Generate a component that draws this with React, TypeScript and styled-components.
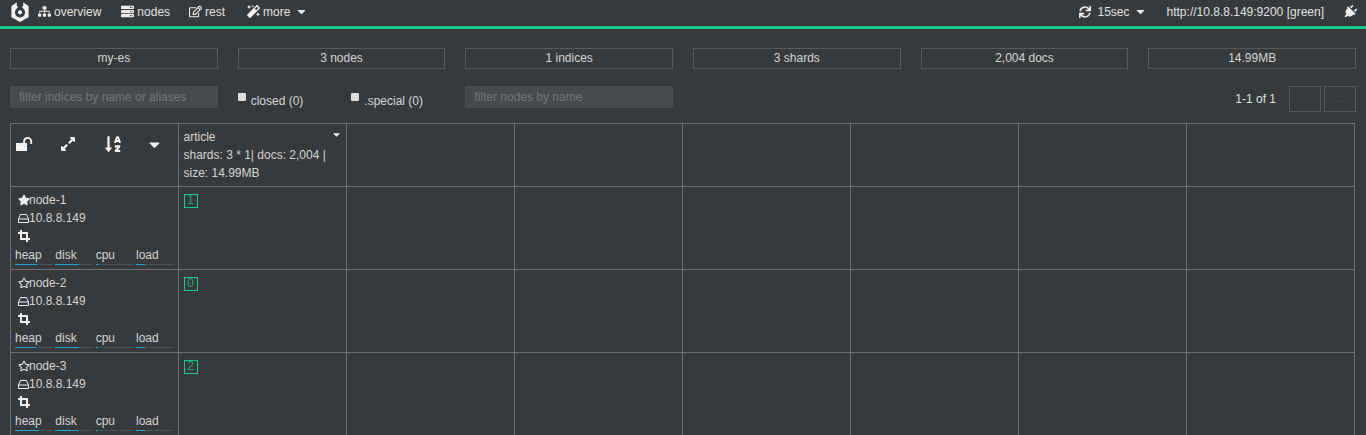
import React from "react";
import styled, { createGlobalStyle } from "styled-components";
import {
  FaSitemap, FaServer, FaRegEdit, FaMagic, FaSync, FaPlug, FaStar, FaRegStar,
  FaExpandAlt, FaSortAlphaDown, FaCaretDown,
} from "react-icons/fa";

const Global = createGlobalStyle`
  html, body { margin: 0; padding: 0; background: #373a3c; height: 100%; overflow: hidden; }
  body { font-family: "Liberation Sans", Arial, sans-serif; font-size: 12px; color: #d3d5d6; line-height: 18px; }
  * { box-sizing: border-box; }
`;

const Nav = styled.nav`
  height: 29px;
  border-bottom: 3px solid #17c98d;
  display: flex;
  align-items: center;
  justify-content: space-between;
  padding: 0 9px 3px 10px;
  color: #e0e2e3;
`;
const NavGroup = styled.div`
  display: flex;
  align-items: center;
`;
const Logo = styled.svg`
  width: 20px;
  height: 20px;
  margin-right: 8px;
  display: block;
`;
const NavItem = styled.span<{ $gap?: number }>`
  display: inline-flex;
  align-items: center;
  gap: 3px;
  margin-right: ${(p) => p.$gap ?? 19}px;
  white-space: nowrap;
  svg { color: #eeeeee; flex-shrink: 0; }
`;
const NavCaret = styled(FaCaretDown)<{ $left: number }>`
  margin-left: ${(p) => p.$left}px;
`;
const Plug = styled(FaPlug)`
  transform: rotate(45deg);
`;
const Stats = styled.div`
  display: grid;
  grid-template-columns: repeat(6, 1fr);
  gap: 20px;
  padding: 19px 10px 0;
`;
const Stat = styled.div`
  height: 21px;
  border: 1px solid #55595c;
  text-align: center;
  line-height: 19px;
`;
const Filters = styled.div`
  display: grid;
  grid-template-columns: repeat(6, 1fr);
  gap: 20px;
  padding: 17px 10px 0;
  height: 54px;
`;
const FilterInput = styled.input<{ $column?: number }>`
  width: 100%;
  height: 22px;
  background: #464a4d;
  border: 1px solid #4c5053;
  border-radius: 2px;
  padding: 0 8px;
  font: 12px "Liberation Sans", Arial, sans-serif;
  color: #d3d5d6;
  grid-column: ${(p) => p.$column ?? "auto"};
  &::placeholder { color: #737779; opacity: 1; }
`;
const CheckLabel = styled.label<{ $left?: number }>`
  display: flex;
  align-items: center;
  height: 22px;
  margin-top: -8px;
  margin-left: ${(p) => p.$left ?? 0}px;
  white-space: nowrap;
`;
const CheckBox = styled.span`
  width: 8px;
  height: 8px;
  background: #dedede;
  border-radius: 1px;
  margin-right: 5px;
  margin-top: -8px;
`;
const Pager = styled.div`
  display: flex;
  align-items: center;
  justify-content: flex-end;
  height: 26px;
  grid-column: 6;
`;
const PagerText = styled.span`
  margin-right: 10px;
  color: #dfe1e2;
`;
const PagerBtn = styled.button`
  width: 32px;
  height: 26px;
  margin-left: 3px;
  background: transparent;
  border: 1px solid #55595c;
  color: #44484b;
  font: 12px "Liberation Sans", Arial, sans-serif;
  padding: 0;
`;
const Table = styled.table`
  border-collapse: collapse;
  table-layout: fixed;
  width: 1345px;
  margin-left: 10px;
`;
const Cell = styled.td`
  border: 1px solid #6f7274;
  width: 168px;
  padding: 4px 4px 0 4.5px;
  vertical-align: top;
`;
const HeadCell = styled(Cell)`
  height: 63px;
  position: relative;
`;
const NodeCell = styled(Cell)`
  height: 83px;
`;
const HeadTools = styled.div`
  display: flex;
  align-items: center;
  height: 32px;
  padding-left: 0.5px;
  color: #f4f4f4;
`;
const Tool = styled.span<{ $width: number }>`
  width: ${(p) => p.$width}px;
  display: flex;
  align-items: center;
  svg { display: block; }
`;
const IndexCaret = styled(FaCaretDown)`
  position: absolute;
  top: 5px;
  right: 4px;
  color: #eeeeee;
`;
const NodeLine = styled.div`
  display: flex;
  align-items: center;
  height: 18px;
  padding-left: 2.5px;
  svg { color: #eeeeee; flex-shrink: 0; }
`;
const IconSlot = styled.span`
  width: 11px;
  display: flex;
  align-items: center;
`;
const Metrics = styled.div`
  display: grid;
  grid-template-columns: repeat(4, 38px);
  column-gap: 2.33px;
  margin-top: 1px;
  margin-left: -0.5px;
`;
const MetricName = styled.div`
  height: 17px;
  line-height: 19px;
`;
const Track = styled.div`
  height: 1px;
  background: #4c5053;
  margin-top: 1px;
  position: relative;
`;
const Fill = styled.div`
  position: absolute;
  left: 0;
  top: 0;
  height: 1px;
  background: #1fa3d8;
`;
const Shard = styled.span`
  display: block;
  width: 14px;
  height: 14px;
  border: 1px solid #17c98d;
  color: #17a87a;
  font-size: 12px;
  line-height: 11px;
  text-align: center;
  margin-top: 3px;
`;

const UnlockIcon = () => (
  <svg width="17" height="14" viewBox="0 0 17 14">
    <rect x="0" y="6" width="11" height="8" fill="currentColor" />
    <path d="M8 6 V4.5 A3.6 3.6 0 0 1 15.2 4.5 V7" fill="none" stroke="currentColor" strokeWidth="1.9" />
  </svg>
);
const HddIcon = () => (
  <svg width="11" height="9" viewBox="0 0 11 9">
    <path d="M2.5 .5 H8.5 L10.5 5 V8.5 H.5 V5 Z M.5 5 H10.5" fill="none" stroke="currentColor" strokeWidth="1" />
  </svg>
);
const CropIcon = () => (
  <svg width="12" height="12" viewBox="0 0 12 12">
    <path d="M3 0 V9 H12 M0 3 H9 V12" fill="none" stroke="currentColor" strokeWidth="2" />
  </svg>
);

const metrics = ["heap", "disk", "cpu", "load"];
const nodes = [
  { name: "node-1", master: true, shard: "1", fills: [22, 24, 2, 9] },
  { name: "node-2", master: false, shard: "0", fills: [21, 24, 2, 9] },
  { name: "node-3", master: false, shard: "2", fills: [24, 24, 2, 9] },
];
const blanks = [0, 1, 2, 3, 4, 5];

export default function App() {
  return (
    <>
      <Global />
      <Nav>
        <NavGroup>
          <Logo viewBox="0 0 20 20">
            <path fillRule="evenodd" fill="#f1f1f1" d="M6.8 0.6 V3.9 H13.2 V0.6 L18.6 4 V15.2 L10 20 L1.4 15.2 V4 Z M10 5.2 A5.1 5.1 0 1 0 10 15.4 A5.1 5.1 0 1 0 10 5.2 Z" />
            <path fill="#373a3c" d="M7.7 0 H12.3 V6 H7.7 Z" />
            <circle cx="10" cy="10.3" r="2.1" fill="#f1f1f1" />
          </Logo>
          <NavItem $gap={20}><FaSitemap size={13} />overview</NavItem>
          <NavItem $gap={19}><FaServer size={13} />nodes</NavItem>
          <NavItem $gap={22}><FaRegEdit size={13} />rest</NavItem>
          <NavItem $gap={0}><FaMagic size={13} />more<NavCaret size={13} $left={2} /></NavItem>
        </NavGroup>
        <NavGroup>
          <NavItem $gap={20}><FaSync size={12} />&nbsp;15sec<NavCaret size={13} $left={1} /></NavItem>
          <NavItem $gap={19}>http://10.8.8.149:9200 [green]</NavItem>
          <NavItem $gap={0}><Plug size={14} /></NavItem>
        </NavGroup>
      </Nav>
      <Stats>
        {["my-es", "3 nodes", "1 indices", "3 shards", "2,004 docs", "14.99MB"].map((s) => (
          <Stat key={s}>{s}</Stat>
        ))}
      </Stats>
      <Filters>
        <FilterInput placeholder="filter indices by name or aliases" />
        <NavGroup>
          <CheckLabel><CheckBox />closed (0)</CheckLabel>
          <CheckLabel $left={48}><CheckBox />.special (0)</CheckLabel>
        </NavGroup>
        <FilterInput placeholder="filter nodes by name" $column={3} />
        <Pager>
          <PagerText>1-1 of 1</PagerText>
          <PagerBtn>←</PagerBtn>
          <PagerBtn>→</PagerBtn>
        </Pager>
      </Filters>
      <Table>
        <tbody>
          <tr>
            <HeadCell>
              <HeadTools>
                <Tool $width={44}><UnlockIcon /></Tool>
                <Tool $width={44}><FaExpandAlt size={16} /></Tool>
                <Tool $width={42}><FaSortAlphaDown size={18} /></Tool>
                <Tool $width={20}><FaCaretDown size={17} /></Tool>
              </HeadTools>
            </HeadCell>
            <HeadCell>
              article
              <br />
              shards: 3 * 1| docs: 2,004 |
              <br />
              size: 14.99MB
              <IndexCaret size={11} />
            </HeadCell>
            {blanks.map((b) => <HeadCell key={b} />)}
          </tr>
          {nodes.map((n) => (
            <tr key={n.name}>
              <NodeCell>
                <NodeLine><IconSlot>{n.master ? <FaStar size={12} /> : <FaRegStar size={12} />}</IconSlot>{n.name}</NodeLine>
                <NodeLine><IconSlot><HddIcon /></IconSlot>10.8.8.149</NodeLine>
                <NodeLine><IconSlot><CropIcon /></IconSlot></NodeLine>
                <Metrics>
                  {metrics.map((m, i) => (
                    <div key={m}>
                      <MetricName>{m}</MetricName>
                      <Track><Fill style={{ width: n.fills[i] }} /></Track>
                    </div>
                  ))}
                </Metrics>
              </NodeCell>
              <NodeCell><Shard>{n.shard}</Shard></NodeCell>
              {blanks.map((b) => <NodeCell key={b} />)}
            </tr>
          ))}
        </tbody>
      </Table>
    </>
  );
}
